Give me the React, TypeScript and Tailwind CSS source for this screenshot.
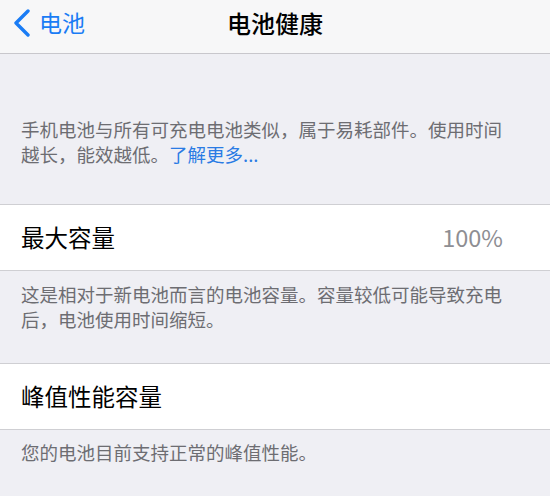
const font = { fontFamily: '"Noto Sans CJK SC", "Noto Sans", sans-serif' };

function Row({ label, value }: { label: string; value?: string }) {
  return (
    <div className="flex h-[67px] items-center justify-between border-y border-[#cfcfd3] bg-white pl-[21px] pr-[47px]">
      <span className="text-[23.5px] text-black">{label}</span>
      {value && <span className="text-[23.5px] text-[#8e8e93]">{value}</span>}
    </div>
  );
}

function Note({ children, className = "" }: { children: React.ReactNode; className?: string }) {
  return (
    <p className={`pl-[21px] pr-[40px] text-[18.5px] leading-[25px] text-[#6d6d72] ${className}`}>
      {children}
    </p>
  );
}

export default function App() {
  return (
    <div className="h-[496px] w-[550px] overflow-hidden bg-[#efeff4]" style={font}>
      {/* nav */}
      <div className="grid h-[54px] grid-cols-[1fr_auto_1fr] items-center border-b border-[#c8c7cc] bg-[#f7f7f8] pb-[8px]">
        <div className="flex items-center gap-[7px] pl-[12px] text-[#1a7cf5]">
          <svg width="20" height="28" viewBox="0 0 20 28" fill="none">
            <path d="M16 2 L4 14 L16 26" stroke="currentColor" strokeWidth="3.4" strokeLinecap="round" strokeLinejoin="round" />
          </svg>
          <span className="text-[23px]">电池</span>
        </div>
        <div className="text-[24px] font-medium text-black">电池健康</div>
        <div />
      </div>

      <Note className="pt-[63px] pb-[37px]">
        手机电池与所有可充电电池类似，属于易耗部件。使用时间越长，能效越低。<span className="text-[#2a7be4]">了解更多...</span>
      </Note>

      <Row label="最大容量" value="100%" />

      <Note className="pt-[11px] pb-[31px]">
        这是相对于新电池而言的电池容量。容量较低可能导致充电后，电池使用时间缩短。
      </Note>

      <Row label="峰值性能容量" />

      <Note className="pt-[10px]">您的电池目前支持正常的峰值性能。</Note>
    </div>
  );
}
